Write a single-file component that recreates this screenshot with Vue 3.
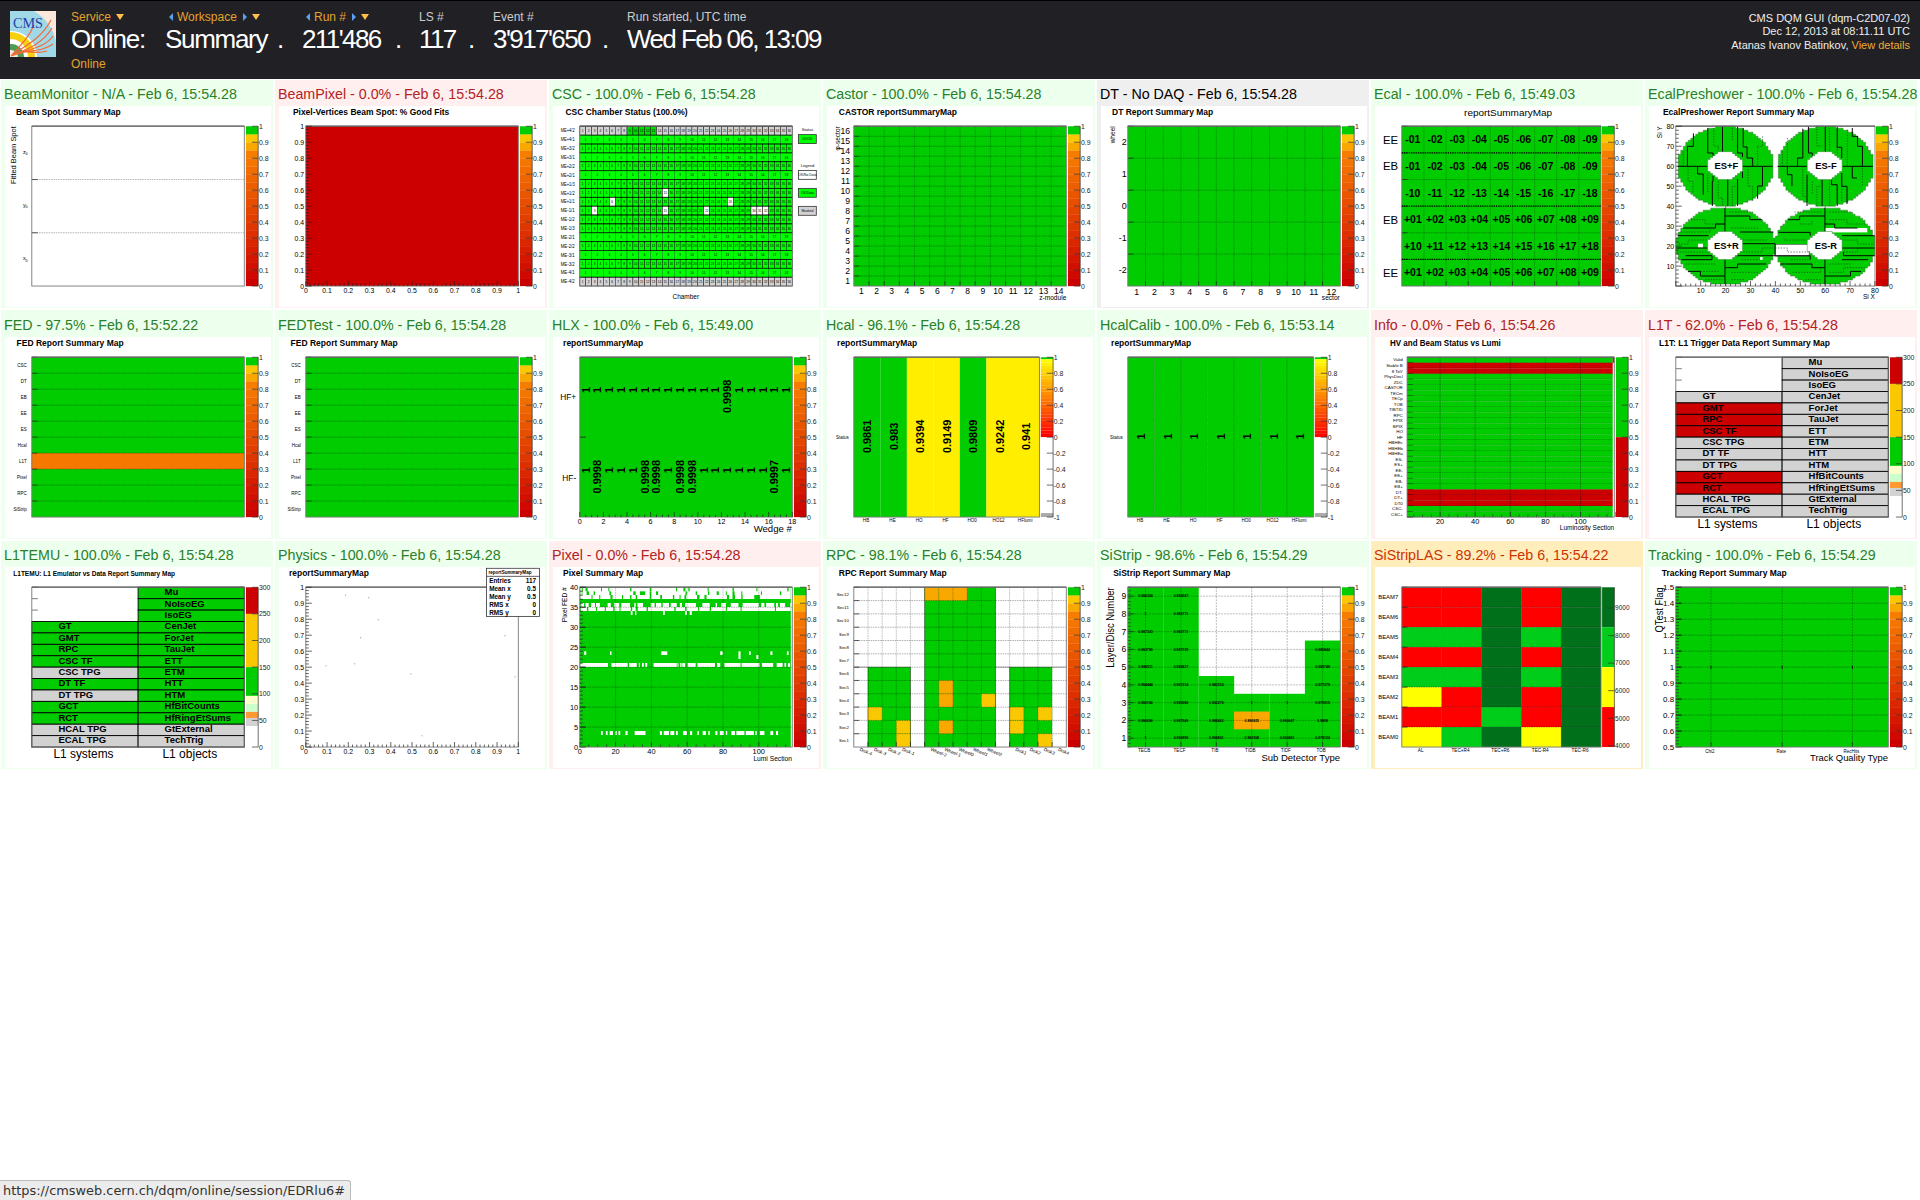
<script setup>
const L = 26.8, R = 239.3, T = 20.4, B = 181.2, H = B - T
const GREEN = '#00cc00', RED = '#cc0000', ORANGE = '#f9a800', YELLOW = '#f9c800', GREY = '#d2d2d2'

function chart(build) {
  const ops = []
  const g = {
    rect: (x, y, w, h, fill, stroke, sw = 0.6) => ops.push({ k: 'r', x, y, w, h, fill, stroke, sw }),
    path: (d, stroke = '#222', w = 0.6, dash, transform) => ops.push({ k: 'p', d, stroke, w, dash, transform }),
    shape: (d, fill, stroke = 'none') => ops.push({ k: 'p', d, fill, stroke, w: 0.5 }),
    text: (x, y, t, s, o = {}) => ops.push({ k: 't', x, y, t, s, a: o.a || 'start', b: o.b, len: o.len, r: o.r, fill: o.fill }),
    title: (x, len, t, s = 9.4) => g.text(x, 8.8, t, s, { b: true, len }),
    frame: (l = L, r = R) => {
      g.rect(l, T, r - l, H, 'none', '#777', 0.9)
      g.path(`M${l} ${T - 0.2}H${r}`, '#555', 1.1)
    },
    hgrid: (n, l = L, r = R, dash = '1.6 .8', c = 'rgba(0,0,0,.5)') => {
      for (let i = 0; i < n; i++) {
        const y = T + (H * i) / n
        if (i) g.path(`M${l} ${y}H${r}`, c, 0.6, dash)
        g.path(`M${l} ${y}h5.5`, '#222', 0.7)
      }
    },
    vgrid: (n, l = L, r = R, tick = true) => {
      for (let i = 1; i < n; i++) {
        const x = l + ((r - l) * i) / n
        g.path(`M${x} ${T}V${B}`, 'rgba(0,0,0,.42)', 0.6, '1.6 .8')
        if (tick) g.path(`M${x} ${B}v-5`, '#222', 0.7)
      }
    },
    yaxis: (labels, s, minor = 5, o = 0) => {
      const n = labels.length - 1
      for (let i = 0; i <= n * minor; i++) g.path(`M${L} ${B - (H * i) / (n * minor)}h${i % minor ? 3 : 6}`, '#222', 0.7)
      labels.forEach((t, i) => t !== '' && g.text(25.2, B - (H * i) / n + s * 0.36 + o, t, s, { a: 'end' }))
    },
    xaxis: (labels, s, minor, l = L, r = R, y = 187.8) => {
      const n = labels.length - 1
      for (let i = 0; i <= n * minor; i++) g.path(`M${l + ((r - l) * i) / (n * minor)} ${B}v${i % minor ? -2.5 : -5}`, '#222', 0.7)
      labels.forEach((t, i) => t !== '' && g.text(l + ((r - l) * i) / n, y, t, s, { a: 'middle' }))
    },
    scaleTicks: (x, labels, s = 6.9) => {
      g.path(`M${x + 12.3} ${T}V${B}`, '#333', 0.7)
      labels.forEach(([v, t]) => {
        const y = B - H * v
        g.path(`M${x + 6} ${y}h6.3`, '#333', 0.7)
        g.text(x + 13, y + s * 0.36, t, s, { fill: '#222' })
      })
    },
    palette: (x = 240.9) => {
      for (let i = 0; i < 20; i++) {
        const c = i === 19 ? GREEN : i === 18 ? YELLOW : i === 17 ? ORANGE : `rgb(${205 + i * 2.6},${i * 7.8},0)`
        g.rect(x, B - (H * (i + 1)) / 20, 12.3, H / 20 + 0.1, c)
      }
      g.scaleTicks(x, [0, 1, 2, 3, 4, 5, 6, 7, 8, 9, 10].map(i => [i / 10, String(i / 10)]))
    },
    heat: x => {
      g.rect(x, T, 12.3, 2, GREEN)
      for (let i = 0; i < 24; i++) g.rect(x, T + 2 + i * 3.26, 12.3, 3.36, `rgb(255,${Math.round(250 - i * 10.8)},0)`)
      g.rect(x, B - 4, 12.3, 4, '#aaa')
      g.scaleTicks(x, [-5, -4, -3, -2, -1, 0, 1, 2, 3, 4, 5].map(i => [(i + 5) / 10, String(i / 5)]))
    },
    trigger: x => {
      const seg = (a, b, c) => g.rect(x, B - (H * b) / 300, 12.3, (H * (b - a)) / 300, c)
      seg(250, 300, RED); seg(150, 250, YELLOW); seg(96, 150, GREEN); seg(81, 96, '#ffffcc')
      seg(66, 81, '#ccffcc'); seg(54.5, 66, '#ff9933'); seg(39.5, 54.5, GREY)
      g.scaleTicks(x, [0, 50, 100, 150, 200, 250, 300].map(v => [v / 300, String(v)]))
    },
  }
  build(g)
  return ops
}

const tenths = [0, 1, 2, 3, 4, 5, 6, 7, 8, 9, 10].map(i => String(i / 10))
const zx = z => z / 2.851 - 5
const zy = z => z / 2.98 - 29.2

const beamMonitor = chart(g => {
  g.title(11.1, 104.5, 'Beam Spot Summary Map')
  g.text(11.2, T, 'Fitted Beam Spot', 7.8, { r: -90, a: 'end', len: 58 })
  ;['z', 'y', 'x'].forEach((t, i) => {
    g.text(18, 48 + i * 53.5, t, 5.5)
    g.text(20.4, 49.6 + i * 53.5, '0', 3.8)
  })
  for (let i = 1; i < 3; i++) {
    g.path(`M${L} ${T + (H * i) / 3}H${R}`, '#999', 0.7, '1.6 .8')
    g.path(`M${L} ${T + (H * i) / 3}h6`, '#333', 0.8)
  }
  g.frame(); g.palette()
})

const beamPixel = chart(g => {
  g.title(13.9, 156.4, 'Pixel-Vertices Beam Spot: % Good Fits')
  g.rect(L, T, R - L, H, RED)
  g.frame(); g.yaxis(tenths, 6.9); g.xaxis(tenths, 6.9, 5); g.palette()
})

const csc = chart(g => {
  g.title(12.5, 122, 'CSC Chamber Status (100.0%)')
  const rows = ['+4/2', '+4/1', '+3/2', '+3/1', '+2/2', '+2/1', '+1/3', '+1/2', '+1/1', '-1/1', '-1/2', '-1/3', '-2/1', '-2/2', '-3/1', '-3/2', '-4/1', '-4/2']
  const empty = { 7: [15], 8: [6, 26], 9: [3, 15, 22, 30, 31, 32] }
  const rh = H / 18
  rows.forEach((name, i) => {
    const n = /[432]\/1/.test(name) ? 18 : 36, w = (R - L) / n, y = T + i * rh
    g.text(21.6, y + rh / 2 + 1.7, 'ME' + name, 4.6, { a: 'end', len: 13.8 })
    for (let c = 1; c <= n; c++) {
      let fill = '#00ff00'
      if (i === 17 || (i === 0 && (c < 9 || c > 13))) fill = GREY
      if (i === 0 && c >= 9 && c <= 13) fill = '#00dd00'
      if (empty[i]?.includes(c)) fill = '#fff'
      const x = L + (c - 1) * w
      g.rect(x, y, w, rh, fill, n === 36 ? '#000' : '#061', n === 36 ? 0.45 : 0.4)
      g.text(x + w / 2, y + rh / 2 + 1.2, String(c), 3.2, { a: 'middle' })
    }
    g.path(`M${L} ${y}H${R}`, '#000', 0.6)
  })
  g.frame()
  g.text(254.5, 25, 'Status', 4, { a: 'middle' })
  g.text(254.5, 61.4, 'Legend', 4, { a: 'middle' })
  ;[[28.8, '#00ff00', 'GOOD'], [64.8, '#fff', 'OK/No Data'], [82.9, '#00ff00', 'OK/Data'], [101, GREY, 'Masked']].forEach(([y, c, t]) => {
    g.rect(245.4, y, 17.9, 9, c, '#333', 0.8)
    g.text(254.4, y + 5.8, t, 3.4, { a: 'middle' })
  })
  g.text(132.8, 194.6, 'Chamber', 6.5, { a: 'middle' })
})

const castor = chart(g => {
  g.title(11.8, 118.2, 'CASTOR reportSummaryMap')
  g.rect(L, T, R - L, H, GREEN)
  g.hgrid(16); g.vgrid(14); g.frame(); g.palette()
  for (let i = 1; i <= 16; i++) g.text(23, B - (H * (i - 0.5)) / 16 + 3.1, String(i), 8.6, { a: 'end' })
  for (let i = 1; i <= 14; i++) g.text(L + ((R - L) * (i - 0.5)) / 14, 189.6, String(i), 8.5, { a: 'middle' })
  g.text(13.4, T, 'φ-sector', 6.6, { r: -90, a: 'end' })
  g.text(239.3, 194.8, 'z-module', 6.6, { a: 'end' })
})

const dt = chart(g => {
  g.title(11.1, 101, 'DT Report Summary Map')
  g.rect(L, T, R - L, H, GREEN)
  g.hgrid(5); g.vgrid(12); g.frame(); g.palette()
  for (let i = 0; i < 5; i++) g.text(25.8, T + (H * (i + 0.5)) / 5 + 3.1, String(2 - i), 9, { a: 'end' })
  for (let i = 1; i <= 12; i++) g.text(L + ((R - L) * (i - 0.5)) / 12, 189.8, String(i), 8.7, { a: 'middle' })
  g.text(14, T, 'wheel', 6.6, { r: -90, a: 'end' })
  g.text(238.8, 194.8, 'sector', 6.6, { a: 'end' })
})

const ecal = chart(g => {
  const r = 226
  g.text(133.1, 9.6, 'reportSummaryMap', 10, { a: 'middle', len: 88 })
  g.rect(L, T, r - L, H, GREEN)
  g.hgrid(6, L, r); g.vgrid(9, L, r); g.frame(L, r); g.palette(227)
  ;[1, 3, 5].forEach(i => g.path(`M${L} ${T + (H * i) / 6}H${r}`, '#000', 1.2, '1.2 1.1'))
  ;[['-', 1], ['-', 1], ['-', 10], ['+', 1], ['+', 10], ['+', 1]].forEach(([sign, from], row) => {
    for (let c = 0; c < 9; c++)
      g.text(L + ((r - L) * (c + 0.5)) / 9, T + (H * (row + 0.5)) / 6 + 3.7, sign + String(from + c).padStart(2, '0'), 10.5, { a: 'middle', b: true })
  })
  ;[['EE', 0], ['EB', 1], ['EB', 3], ['EE', 5]].forEach(([t, i]) => g.text(23.2, T + (H * (i + 0.5)) / 6 + 4.3, t, 11.4, { a: 'end' }))
})

const preshower = chart(g => {
  const r = 226, cw = (r - L) / 80, ch = H / 80
  g.title(13.9, 151.2, 'EcalPreshower Report Summary Map')
  const px = x => L + x * cw, py = y => B - y * ch
  const disc = (cx, cy, rx, ry) => {
    let right = '', left = ''
    const n = Math.round(ry)
    for (let j = -n; j < n; j++) {
      const w = Math.round(rx * Math.sqrt(Math.max(0, 1 - ((j + 0.5) / ry) ** 2)))
      right += `L${px(cx + w)} ${py(cy + j)}V${py(cy + j + 1)}`
      left = `L${px(cx - w)} ${py(cy + j + 1)}V${py(cy + j)}` + left
    }
    return 'M' + (right + left).slice(1) + 'Z'
  }
  ;[[20, 60, 19.3, 20], [60.2, 60, 19.3, 20], [20, 20, 20, 19.5], [60, 20, 20.2, 19.5]].forEach(([x, y, a, b]) => g.shape(disc(x, y, a, b), GREEN, '#474'))
  const tr = 'translate(-279 -28.2) scale(.35075 .33557)'
  g.rect(1155 / 2.851 - 279, 499 / 2.98 - 28.2, 34, 11.8, '#fff', '#333', 0.5)
  g.rect(1298 / 2.851 - 279, 450 / 2.98 - 28.2, 42, 4.4, '#fff')
  g.rect(935 / 2.851 - 279, 497 / 2.98 - 28.2, 5, 4, '#fff')
  g.rect(1112 / 2.851 - 279, 537 / 2.98 - 28.2, 2.6, 2.8, '#fff')
  const solid = [
    'M877 265H963M1062 265H1148M1005 145V224M1020 303V384M922 166V205H905V265M963 150V225H978V240M1048 145V225H1062V237M1091 265V240H1075V207H1064V150M934 265V288H950V350M978 292V310H976V384M1048 303V384M1062 280V300M1119 267V324H1105V362',
    'M1162 265H1246M1348 265H1434M1298 145V222M1289 306V384M1234 152V240H1219V265M1250 145V225H1261V237M1332 145V208H1345V240M1375 150V175H1390V205H1404V265M1190 267V290H1203V324M1246 290V384M1316 300V320H1332V384M1345 285V325H1360V378M1375 265V300H1388',
    'M1012 390V463M1012 540V618M1012 414H1083V425H1118M1012 438H985V450H893M877 473H965M872 510H963M1062 497H1155V533H1045M1055 462H1150M900 533H975V545H888M1012 569H1048V558H1130M907 580H942V594H1012',
    'M1297 390V463M1297 540V618M1297 414H1225V425H1192M1297 438H1325V450H1390M1165 463H1255V473M1346 473H1440M1346 510H1440M1155 533H1255V545M1345 545H1420M1170 558H1260V569H1297M1297 594H1370V580H1400M1350 522V533H1440',
  ]
  solid.forEach(d => g.path(d, '#000', 2.8, undefined, tr))
  const dashed = [
    'M980 150V204H993V222M1033 150V190M1119 175V205H1105V265M893 220V265M907 265V310H921V345M963 290V345M993 310V360H1005V384M1033 384V325H1048M1078 265V325H1091V370',
    'M1274 145V204H1289M1310 150V222M1332 205V230M1361 155V265M1176 220V265M1190 180V265M1234 265V355H1246M1261 310V350M1274 384V325H1289M1310 300V384M1404 270V325M1345 285V370',
    'M907 425H955V438H998M1025 402H1090M1030 450H1110M885 462H970V450M880 498H907V486H963M1062 486H1130M875 522H965M1060 545H1110M1048 522H1118V510H1150M900 558H985M942 580H998M1030 583H1110M955 605H1005M1030 605H1070',
    'M1210 402H1285M1225 438H1260V425M1310 402H1370M1310 425H1360V438H1418M1180 486H1250M1155 510H1190V522H1250M1345 486H1390V498H1435M1350 522H1390V510M1200 545H1250M1205 583H1285V570M1310 558H1370M1310 583H1350V569H1410M1240 605H1285',
  ]
  dashed.forEach(d => g.path(d, '#131', 1.7, '4 4', tr))
  ;[[20, 60, 'ES+F'], [60, 60, 'ES-F'], [20, 20, 'ES+R'], [60, 20, 'ES-R']].forEach(([x, y, t]) => {
    g.shape(disc(x - 0.2, y + 0.3, 7, 7), '#fff', '#383')
    g.text(px(x + 0.3), py(y) + 2.6, t, 9.4, { a: 'middle', b: true })
  })
  g.frame(L, r)
  g.yaxis(['', '10', '20', '30', '40', '50', '60', '70', '80'], 7, 5)
  g.xaxis(['', '10', '20', '30', '40', '50', '60', '70', '80'], 7, 5, L, r)
  g.text(13.5, T, 'Si Y', 6.6, { r: -90, a: 'end' })
  g.text(226, 194.6, 'Si X', 6.6, { a: 'end' })
  g.palette(227)
})

const fed = bad => chart(g => {
  g.title(11.6, 107, 'FED Report Summary Map')
  g.rect(L, T, R - L, H, GREEN)
  if (bad) g.rect(L, T + H * 0.6, R - L, H / 10, '#f57900')
  g.hgrid(10); g.frame(); g.palette()
  ;['CSC', 'DT', 'EB', 'EE', 'ES', 'Hcal', 'L1T', 'Pixel', 'RPC', 'SiStrip'].forEach((t, i) => g.text(21.8, T + (H * (i + 0.5)) / 10 + 1.6, t, 4.5, { a: 'end' }))
})

const hlx = chart(g => {
  g.title(10.1, 80, 'reportSummaryMap')
  g.rect(L, T, R - L, H, GREEN)
  const w = (R - L) / 18
  const low = [{ 12: '0.9998' }, { 1: '0.9998', 5: '0.9998', 6: '0.9998', 8: '0.9998', 9: '0.9998', 16: '0.9997' }]
  low.forEach((m, row) => {
    for (let c = 0; c < 18; c++) {
      const t = m[c] || '1'
      g.text(L + w * (c + 0.5) + 3.9, (t === '1' ? 53.3 : 59.8) + row * 80.8, t, 11, { r: -90, a: 'middle', b: true })
    }
  })
  g.frame()
  g.path(`M${L} ${T + H / 2}h6`, '#222', 0.8)
  g.xaxis(['0', '2', '4', '6', '8', '10', '12', '14', '16', '18'], 7.2, 4)
  g.text(23.2, 63.6, 'HF+', 8.3, { a: 'end' })
  g.text(23.2, 144.6, 'HF-', 8.3, { a: 'end' })
  g.text(238.8, 196.3, 'Wedge #', 9.6, { a: 'end' })
  g.palette()
})

const hcalNames = ['HB', 'HE', 'HO', 'HF', 'HO0', 'HO12', 'HFlumi']
const hcal = (values, fills, grid) => chart(g => {
  const r = 212.4, w = (r - L) / 7
  g.title(10.1, 80, 'reportSummaryMap')
  values.forEach((t, i) => {
    g.rect(L + i * w, T, w + 0.1, H, fills[i])
    g.text(L + (i + 0.5) * w + 4, 100, t, 11, { r: -90, a: 'middle', b: true })
    g.text(L + (i + 0.5) * w - 1, 186.6, hcalNames[i], 4.6, { a: 'middle' })
  })
  if (grid) g.vgrid(7, L, r, false)
  g.frame(L, r)
  g.text(21.8, 102.4, 'Status', 4.5, { a: 'end' })
  g.heat(213.8)
})

const info = chart(g => {
  g.title(15, 110.8, 'HV and Beam Status vs Lumi')
  const l = 32.1, r = 237.7, rh = H / 29
  const names = 'Valid,Stable B,8 TeV,PhysDecl,ZDC,CASTOR,TECm,TECp,TOB,TIBTID,RPC,FPIX,BPIX,HO,HF,HBHEc,HBHEb,HBHEa,ES-,ES+,EE-,EE+,EB-,EB+,DT-,DT+,DT0,CSC-,CSC+'.split(',')
  names.forEach((t, i) => {
    const y = T + i * rh
    g.rect(l, y, r - l, rh + 0.1, [1, 2, 24, 25, 26].includes(i) ? RED : GREEN)
    g.path(`M${l} ${y + rh}H${r}`, 'rgba(0,0,0,.6)', 0.55, '1.6 .7')
    g.path(`M${l} ${y + rh}h6`, '#111', 0.7)
    g.text(27.8, y + rh / 2 + 1.5, t, 4.4, { a: 'end' })
  })
  g.rect(r, T, 1.6, rh, RED)
  for (let i = 1; i < 6; i++) {
    const x = 30 + 35.1 * i
    g.path(`M${x} ${T}V${B}`, 'rgba(0,0,0,.6)', 0.6, '1.6 .8')
    g.text(x, 188, String(i * 20), 7.4, { a: 'middle' })
  }
  for (let i = 0; i < 24; i++) g.path(`M${l + 6.7 + i * 8.78} ${B}v${i % 4 === 3 ? -5 : -2.6}`, '#222', 0.6)
  g.frame(l, R)
  g.text(239.2, 194.6, 'Luminosity Section', 6.8, { a: 'end', len: 54.4 })
  g.rect(240.9, T, 12.3, H / 2, GREEN)
  g.rect(240.9, T + H / 2, 12.3, H / 2, RED)
  g.scaleTicks(240.9, tenths.map((t, i) => [i / 10, t]))
})

const trigger = (title, tx, len, size, left, right) => chart(g => {
  g.title(tx, len, title, size)
  const mid = 133.1, rh = H / 14
  const sys = ['', '', '', 'GT', 'GMT', 'RPC', 'CSC TF', 'CSC TPG', 'DT TF', 'DT TPG', 'GCT', 'RCT', 'HCAL TPG', 'ECAL TPG']
  const obj = ['Mu', 'NoIsoEG', 'IsoEG', 'CenJet', 'ForJet', 'TauJet', 'ETT', 'ETM', 'HTT', 'HTM', 'HfBitCounts', 'HfRingEtSums', 'GtExternal', 'TechTrig']
  for (let i = 0; i < 14; i++) {
    const y = T + i * rh
    if (sys[i]) {
      g.rect(L, y, mid - L, rh, left(i), '#000', 0.9)
      g.text(53.4, y + 7.9, sys[i], 9.5, { b: true })
    } else g.path(`M${L} ${y}h6`, '#444', 0.7)
    g.rect(mid, y, R - mid, rh, right(i), '#000', 0.9)
    g.text(159.6, y + 7.9, obj[i], 9.5, { b: true })
  }
  g.frame()
  g.text(78.5, 192.3, 'L1 systems', 12, { a: 'middle', len: 60 })
  g.text(184.8, 192.3, 'L1 objects', 12, { a: 'middle', len: 54.8 })
  g.trigger(240.9)
})

const physics = chart(g => {
  g.title(10, 80, 'reportSummaryMap')
  g.frame(); g.yaxis(tenths, 6.9); g.xaxis(tenths, 6.9, 5)
  ;[[984, 170], [1050, 178], [1077, 244], [1027, 298], [928, 382], [1010, 376], [1170, 406], [1438, 292], [1467, 415], [1202, 592]].forEach(([x, y]) =>
    g.rect(x / 2.851 - 279, zy(y), 0.9, 0.9, '#777'))
  g.rect(207.5, 1.3, 53, 48.4, '#fff', '#333', 0.8)
  g.path('M207.5 9.4h53', '#333', 0.8)
  g.text(231, 7, 'reportSummaryMap', 5, { a: 'middle', b: true, len: 43 })
  ;[['Entries', '117'], ['Mean x', '0.5'], ['Mean y', '0.5'], ['RMS x', '0'], ['RMS y', '0']].forEach(([a, b], i) => {
    g.text(210.2, 16 + i * 8.05, a, 6.4, { b: true })
    g.text(257, 16 + i * 8.05, b, 6.4, { b: true, a: 'end' })
  })
})

const pixel = chart(g => {
  g.title(10.1, 80, 'Pixel Summary Map')
  g.rect(L, T, 211, H, GREEN)
  const cut = (y1, y2, list, fill = '#fff') => list.forEach(([a, b]) => g.rect(zx(a), zy(y1), (b - a) / 2.851, (y2 - y1) / 2.98, fill))
  cut(148, 183, [[92, 692]])
  cut(195, 219, [[92, 692]])
  cut(148, 160, [[96, 99], [107, 113], [151, 154], [172, 175], [234, 238], [290, 294], [365, 368], [386, 392], [400, 404], [455, 458], [526, 530], [594, 597], [682, 686]], GREEN)
  cut(160, 171, [[96, 98], [110, 117], [130, 134], [175, 180], [243, 250], [262, 277], [290, 294], [308, 314], [392, 396], [421, 425], [456, 460], [481, 487], [507, 510], [526, 532], [551, 554], [607, 610], [661, 665]], GREEN)
  cut(171, 184, [[124, 127], [146, 149], [178, 184], [211, 214], [234, 238], [250, 254], [290, 294], [320, 325], [356, 360], [375, 378], [389, 394], [425, 432], [446, 452], [510, 516], [526, 533], [551, 555], [588, 604]], GREEN)
  cut(195, 207, [[92, 95], [103, 107], [116, 123], [134, 137], [148, 170], [179, 189], [203, 209], [234, 246], [250, 255], [271, 293], [304, 308], [323, 327], [345, 350], [367, 376], [382, 391], [422, 440], [461, 478], [482, 494], [507, 521], [543, 555], [601, 608], [617, 622], [645, 650], [656, 661], [676, 690]], GREEN)
  cut(207, 219, [[92, 94], [111, 115], [137, 140], [162, 165], [186, 190], [204, 207], [236, 240], [250, 256], [281, 285], [360, 364], [391, 395], [428, 431], [461, 465], [507, 510], [549, 552], [647, 650]], GREEN)
  cut(219, 231, [[236, 241], [248, 252], [328, 333], [391, 396], [404, 410]])
  cut(340, 351, [[103, 109], [177, 181], [323, 340], [491, 498], [573, 578], [634, 640], [681, 686]])
  cut(340, 363, [[543, 549]])
  cut(351, 363, [[594, 600]])
  cut(375, 387, [[92, 171], [181, 227], [231, 253], [259, 262], [268, 273], [277, 283], [301, 367], [369, 372], [377, 381], [383, 391], [398, 421], [426, 476], [482, 491], [503, 549], [552, 603], [610, 642], [652, 669], [674, 679], [684, 690]])
  cut(579, 591, [[151, 156], [165, 170], [176, 185], [192, 196], [201, 206], [221, 227], [247, 278], [319, 325], [330, 345], [349, 360], [365, 370], [385, 396], [405, 411], [426, 430], [441, 450], [457, 461], [477, 483], [490, 501], [507, 511], [523, 533], [537, 560], [564, 587], [591, 595], [604, 617], [634, 642], [650, 656]])
  g.hgrid(8)
  for (let i = 1; i < 6; i++) g.path(`M${L + i * 35.8} ${T}V${B}`, 'rgba(0,0,0,.42)', 0.6, '1.6 .8')
  for (let i = 0; i < 24; i++) g.path(`M${L + i * 8.95} ${B}v${i % 4 ? -2.5 : -5}`, '#222', 0.7)
  g.frame()
  g.yaxis(['0', '5', '10', '15', '20', '25', '30', '35', '40'], 7.4, 5)
  for (let i = 0; i < 6; i++) g.text(L + i * 35.8, 188, String(i * 20), 7.4, { a: 'middle' })
  g.text(13.8, T, 'Pixel FED #', 6.7, { r: -90, a: 'end' })
  g.text(239, 194.8, 'Lumi Section', 6.7, { a: 'end' })
  g.palette()
})

const rpc = chart(g => {
  g.title(11.8, 108, 'RPC Report Summary Map')
  const w = (R - L) / 15, h = H / 12
  const block = (c, r, n, m, f) => g.rect(L + c * w, T + r * h, n * w, m * h, f)
  block(1, 6, 3, 6, GREEN); block(5, 0, 5, 12, GREEN); block(11, 6, 3, 6, GREEN)
  ;[[5, 0], [6, 0], [7, 0], [6, 7], [6, 8], [6, 10]].forEach(([c, r]) => block(c, r, 1, 1, ORANGE))
  ;[[9, 8], [1, 9], [11, 9], [13, 9], [3, 10], [11, 10], [3, 11], [13, 11]].forEach(([c, r]) => block(c, r, 1, 1, YELLOW))
  g.hgrid(12); g.vgrid(15)
  g.path(`M${L} ${T + H / 2}H${L + 4 * w}M${L + 10 * w} ${T + H / 2}H${R}M${L + 5 * w} ${T}V${B}M${L + 10 * w} ${T}V${B}M${L + w} ${T + H / 2}V${B}M${L + 4 * w} ${T + H / 2}V${B}M${L + 11 * w} ${T + H / 2}V${B}`, 'rgba(0,0,0,.5)', 0.7)
  g.frame()
  for (let i = 0; i < 12; i++) g.text(21.8, T + h * (i + 0.5) + 1.7, 'Sec' + (12 - i), 4.3, { a: 'end' })
  ;['Disk-4', 'Disk-3', 'Disk-2', 'Disk-1', '', 'Wheel-2', 'Wheel-1', 'Wheel0', 'Wheel1', 'Wheel2', '', 'Disk1', 'Disk2', 'Disk3', 'Disk4'].forEach((t, i) =>
    t && g.text(L + w * i + 5.5, 184.8, t, 4.6, { r: 22 }))
  g.palette()
})

const sistrip = chart(g => {
  g.title(12.2, 117.2, 'SiStrip Report Summary Map')
  const w = (R - L) / 6, h = H / 9
  ;[9, 9, 4, 3, 3, 6].forEach((n, i) => g.rect(L + i * w, B - n * h, w + 0.1, n * h, GREEN))
  g.rect(L + 3 * w, B - 2 * h, w, h, ORANGE)
  for (let i = 0; i < 9; i++) {
    const y = B - h * (i + 0.5)
    g.path(`M${L} ${y}H${R}`, 'rgba(0,0,0,.45)', 0.6, '2 1')
    g.path(`M${L} ${y}h6`, '#222', 0.7)
    g.text(25.2, y + 3, String(i + 1), 8.6, { a: 'end' })
  }
  for (let i = 0; i < 46; i++) g.path(`M${L} ${B - (H * i) / 45}h3`, '#222', 0.6)
  const names = ['TECB', 'TECF', 'TIB', 'TIDB', 'TIDF', 'TOB']
  const values = [
    ['1', '0.996696', '0.990196', '0.994444', '0.989511', '0.993795', '0.997333', '1', '0.996324'],
    ['0.996898', '0.997549', '0.995588', '0.997314', '0.995827', '0.997135', '0.992711', '0.992711', '0.992647'],
    ['0.994801', '0.984462', '0.992279', '0.983314'],
    ['0.992308', '0.896825', '1'],
    ['0.990491', '0.990647', '1'],
    ['0.979124', '0.9808', '0.975915', '0.977379', '0.985748', '0.985844'],
  ]
  names.forEach((t, i) => {
    const x = L + w * (i + 0.5)
    g.path(`M${x} ${T}V${B}`, 'rgba(0,0,0,.45)', 0.6, '2 1')
    g.path(`M${x} ${B}v-5`, '#222', 0.7)
    g.text(x - 1.4, 186.4, t, 4.6, { a: 'middle' })
    values[i].forEach((v, j) => g.text(x, B - h * (j + 0.5) + 1.2, v, 3.5, { a: 'middle', b: true }))
  })
  g.frame()
  g.text(13.2, T, 'Layer/Disc Number', 10, { r: -90, a: 'end', len: 81 })
  g.text(239, 194.9, 'Sub Detector Type', 10, { a: 'end', len: 78.6 })
  g.palette()
})

const las = chart(g => {
  const r = 226, w = (r - L) / 5, h = H / 8
  const color = { R: '#ff0000', D: '#00701a', G: '#00cc1a', Y: '#ffff00' }
  ;['RRDRD', 'RRDRD', 'GGDGD', 'RRDRD', 'GGDGD', 'YRDRD', 'RRGRD', 'YGDYD'].forEach((row, i) => {
    ;[...row].forEach((c, j) => g.rect(L + j * w, T + i * h, w + 0.1, h + 0.1, color[c]))
    g.text(23.2, T + h * (i + 0.5) + 2.1, 'BEAM' + (7 - i), 5.9, { a: 'end' })
  })
  g.hgrid(8, L, r); g.vgrid(5, L, r, false); g.frame(L, r)
  ;['AL', 'TEC+R4', 'TEC+R6', 'TEC-R4', 'TEC-R6'].forEach((t, i) => g.text(L + w * (i + 0.5) - 1, 186.4, t, 4.7, { a: 'middle' }))
  ;['D', 'G', 'Y', 'R'].forEach((c, i) => g.rect(227.1, T + (H * i) / 4, 12.3, H / 4, color[c]))
  g.scaleTicks(227.1, [4, 5, 6, 7, 8, 9].map(v => [0.008 + (v - 4) * 0.1724, v + '000']), 6.5)
})

const tracking = chart(g => {
  g.title(12.7, 125, 'Tracking Report Summary Map')
  g.rect(L, T, R - L, H, GREEN)
  g.hgrid(10)
  ;[['Chi2', 62], ['Rate', 133.2], ['RecHits', 203.4]].forEach(([t, x]) => {
    g.path(`M${x} ${T}V${B}`, 'rgba(0,0,0,.45)', 0.6, '2 1')
    g.path(`M${x} ${B}v-5`, '#222', 0.7)
    g.path(`M${x} 99.4v3`, '#111', 1)
    g.text(x - 1, 186.8, t, 4.5, { a: 'middle' })
  })
  g.frame()
  g.yaxis(['0.5', '0.6', '0.7', '0.8', '0.9', '1', '1.1', '1.2', '1.3', '1.4', '1.5'], 8, 5)
  g.text(14, T, 'QTest Flag', 10, { r: -90, a: 'end', len: 45.5 })
  g.text(239, 194.9, 'Track Quality Type', 10, { a: 'end', len: 78 })
  g.palette()
})

const Y = '#ffee00'
const tiles = [
  ['BeamMonitor', 'N/A', '15:54.28', 'ok', beamMonitor],
  ['BeamPixel', '0.0%', '15:54.28', 'bad', beamPixel],
  ['CSC', '100.0%', '15:54.28', 'ok', csc],
  ['Castor', '100.0%', '15:54.28', 'ok', castor],
  ['DT', 'No DAQ', '15:54.28', 'off', dt],
  ['Ecal', '100.0%', '15:49.03', 'ok', ecal],
  ['EcalPreshower', '100.0%', '15:54.28', 'ok', preshower],
  ['FED', '97.5%', '15:52.22', 'ok', fed(true)],
  ['FEDTest', '100.0%', '15:54.28', 'ok', fed(false)],
  ['HLX', '100.0%', '15:49.00', 'ok', hlx],
  ['Hcal', '96.1%', '15:54.28', 'ok', hcal(['0.9861', '0.983', '0.9394', '0.9149', '0.9809', '0.9242', '0.941'], [GREEN, GREEN, Y, Y, GREEN, Y, Y], false)],
  ['HcalCalib', '100.0%', '15:53.14', 'ok', hcal(Array(7).fill('1'), Array(7).fill(GREEN), true)],
  ['Info', '0.0%', '15:54.26', 'bad', info],
  ['L1T', '62.0%', '15:54.28', 'bad', trigger('L1T: L1 Trigger Data Report Summary Map', 10, 171, 9, i => ([4, 5, 6, 10, 11].includes(i) ? RED : GREY), () => GREY)],
  ['L1TEMU', '100.0%', '15:54.28', 'ok', trigger('L1TEMU: L1 Emulator vs Data Report Summary Map', 8.3, 161.7, 7.3, i => ([7, 9, 12, 13].includes(i) ? GREY : GREEN), i => (i > 11 ? GREY : GREEN))],
  ['Physics', '100.0%', '15:54.28', 'ok', physics],
  ['Pixel', '0.0%', '15:54.28', 'bad', pixel],
  ['RPC', '98.1%', '15:54.28', 'ok', rpc],
  ['SiStrip', '98.6%', '15:54.29', 'ok', sistrip],
  ['SiStripLAS', '89.2%', '15:54.22', 'warn', las],
  ['Tracking', '100.0%', '15:54.29', 'ok', tracking],
].map(([name, value, time, state, ops]) => ({ name, state, ops, label: `${name} - ${value} - Feb 6, ${time}` }))

const fields = [
  { cls: 'service', label: 'Service', value: 'Online:', link: true, down: true, sub: 'Online' },
  { cls: 'workspace', label: 'Workspace', value: 'Summary', dot: true, link: true, nav: true, down: true },
  { cls: 'run', label: 'Run #', value: "211'486", dot: true, link: true, nav: true, down: true },
  { cls: 'ls', label: 'LS #', value: '117', dot: true },
  { cls: 'event', label: 'Event #', value: "3'917'650", dot: true },
  { cls: 'started', label: 'Run started, UTC time', value: 'Wed Feb 06, 13:09' },
]
</script>

<template>
  <div class="page">
    <header class="top">
      <svg class="logo" viewBox="0 0 46 46">
        <rect width="46" height="46" fill="#fbe8da" />
        <path d="M0 0H24A48 48 0 0 1 46 30V46H0Z" fill="#a0d8e8" />
        <path d="M0 20A26 26 0 0 1 27 46H0Z" fill="#fff" />
        <path d="M0 21A25 25 0 0 1 25 46H0Z" fill="#f8d010" />
        <path d="M0 28A18 18 0 0 1 18 46H0Z" fill="#fff" />
        <path d="M0 33A13 13 0 0 1 14 46H0Z" fill="#4f9a55" />
        <path d="M0 39A7 7 0 0 1 8 46H0Z" fill="#f4e9e0" />
        <path d="M1 45C12 36 30 30 41 9M1 45C14 39 32 34 42 17M1 45C18 38 35 37 43 25M1 45C16 38 31 42 43 33M1 45C16 37 24 44 37 40M1 45C11 34 19 26 24 14" fill="none" stroke="#f46a35" stroke-width="1.2" />
        <text x="3" y="16.5" textLength="30" lengthAdjust="spacingAndGlyphs" class="logo-text">CMS</text>
      </svg>
      <div v-for="f in fields" :key="f.cls" class="field" :class="f.cls">
        <div class="label" :class="{ link: f.link }">
          <svg v-if="f.nav" class="prev" viewBox="0 0 4 8"><path d="M4 0V8L0 4Z" fill="#5aa0f0" /></svg>
          <span>{{ f.label }}</span>
          <svg v-if="f.nav" class="next" viewBox="0 0 4 8"><path d="M0 0V8L4 4Z" fill="#5aa0f0" /></svg>
          <svg v-if="f.down" class="down" viewBox="0 0 8 6"><path d="M0 0H8L4 6Z" fill="#ffbe4a" /></svg>
        </div>
        <div class="value"><span class="num">{{ f.value }}</span><span v-if="f.dot" class="dot">.</span></div>
        <div v-if="f.sub" class="sub">{{ f.sub }}</div>
      </div>
      <div class="who">
        <div>CMS DQM GUI (dqm-C2D07-02)</div>
        <div>Dec 12, 2013 at 08:11.11 UTC</div>
        <div>Atanas Ivanov Batinkov, <a>View details</a></div>
      </div>
    </header>

    <main class="grid">
      <section v-for="t in tiles" :key="t.name" class="tile" :class="t.state">
        <h2>{{ t.label }}</h2>
        <svg class="plot" viewBox="0 0 266 202.3" preserveAspectRatio="none">
          <template v-for="(o, i) in t.ops" :key="i">
            <rect v-if="o.k === 'r'" :x="o.x" :y="o.y" :width="o.w" :height="o.h" :fill="o.fill" :stroke="o.stroke" :stroke-width="o.sw" />
            <path v-else-if="o.k === 'p'" :d="o.d" :fill="o.fill || 'none'" :stroke="o.stroke" :stroke-width="o.w" :stroke-dasharray="o.dash" :transform="o.transform" />
            <text v-else :x="o.x" :y="o.y" :font-size="o.s" :text-anchor="o.a" :font-weight="o.b ? 700 : 400" :fill="o.fill || '#000'" :textLength="o.len" :lengthAdjust="o.len ? 'spacingAndGlyphs' : undefined" :transform="o.r ? `rotate(${o.r} ${o.x} ${o.y})` : undefined">{{ o.t }}</text>
          </template>
        </svg>
      </section>
    </main>

    <div class="status">https://cmsweb.cern.ch/dqm/online/session/EDRlu6#</div>
  </div>
</template>

<style>
body { background: #fff; overflow: hidden; }
</style>

<style scoped>
.page {
  width: 1920px;
  height: 1200px;
  background: #fff;
  font-family: "Liberation Sans", Arial, sans-serif;
}
.top {
  box-sizing: border-box;
  height: 79px;
  background: #212025;
  border-top: 1px solid #000;
  display: flex;
  color: #fff;
}
.logo { width: 46px; height: 46px; margin: 10px 15px 0 10px; flex: none; }
.logo-text { font-family: "Liberation Serif", serif; font-size: 15px; fill: #2440a8; }
.field { flex: none; padding-top: 8px; white-space: nowrap; }
.label { display: flex; align-items: center; height: 15px; font-size: 12px; color: #ccc; }
.label.link, .sub { color: #e2a32c; }
.value { height: 30px; line-height: 30px; font-size: 26px; letter-spacing: -1.58px; display: flex; }
.sub { font-size: 12px; line-height: 14px; margin-top: 3px; }
.prev, .next { width: 4px; height: 8px; flex: none; }
.prev { margin: 0 4px 0 4px; }
.next { margin-left: 6px; }
.down { width: 8px; height: 6px; margin-left: 5px; }
.service { width: 94px; }
.service .value { letter-spacing: -1.2px; }
.workspace { width: 137px; }
.workspace .value { letter-spacing: -1.3px; }
.run { width: 117px; }
.ls { width: 74px; }
.event { width: 134px; }
.workspace .num { width: 112px; }
.run .num { width: 93px; }
.ls .num { width: 49px; }
.event .num { width: 109px; }
.who { margin-left: auto; padding: 11px 10px 0 0; text-align: right; font-size: 11px; line-height: 13.4px; color: #eee; }
.who a { color: #f0ac30; }
.grid {
  display: grid;
  grid-template-columns: repeat(7, 272px);
  grid-template-rows: 228px 229px 228px;
  gap: 2px;
  padding: 1px 0 0 1px;
}
.tile { box-sizing: border-box; display: flex; flex-direction: column; justify-content: flex-end; padding: 0 2px 1px 4px; }
.tile h2 { margin: 0 -4px 0 -1px; font-size: 14.25px; font-weight: 400; line-height: 24px; height: 24px; white-space: nowrap; }
.plot { display: block; width: 266px; height: 201px; background: #fff; flex: none; }
.ok { background: #edffed; color: #2a7f2a; }
.bad { background: #ffefef; color: #b22222; }
.off { background: #efefef; color: #000; }
.warn { background: #ffeebb; color: #cc3300; }
.status {
  position: fixed;
  left: 0;
  bottom: 0;
  box-sizing: border-box;
  width: 351px;
  height: 20px;
  padding-left: 3px;
  background: #ececec;
  border-top: 1px solid #bbb;
  border-right: 1px solid #bbb;
  border-radius: 0 3px 0 0;
  font: 12.9px/20px "DejaVu Sans", sans-serif;
  color: #333;
  white-space: nowrap;
}
</style>
